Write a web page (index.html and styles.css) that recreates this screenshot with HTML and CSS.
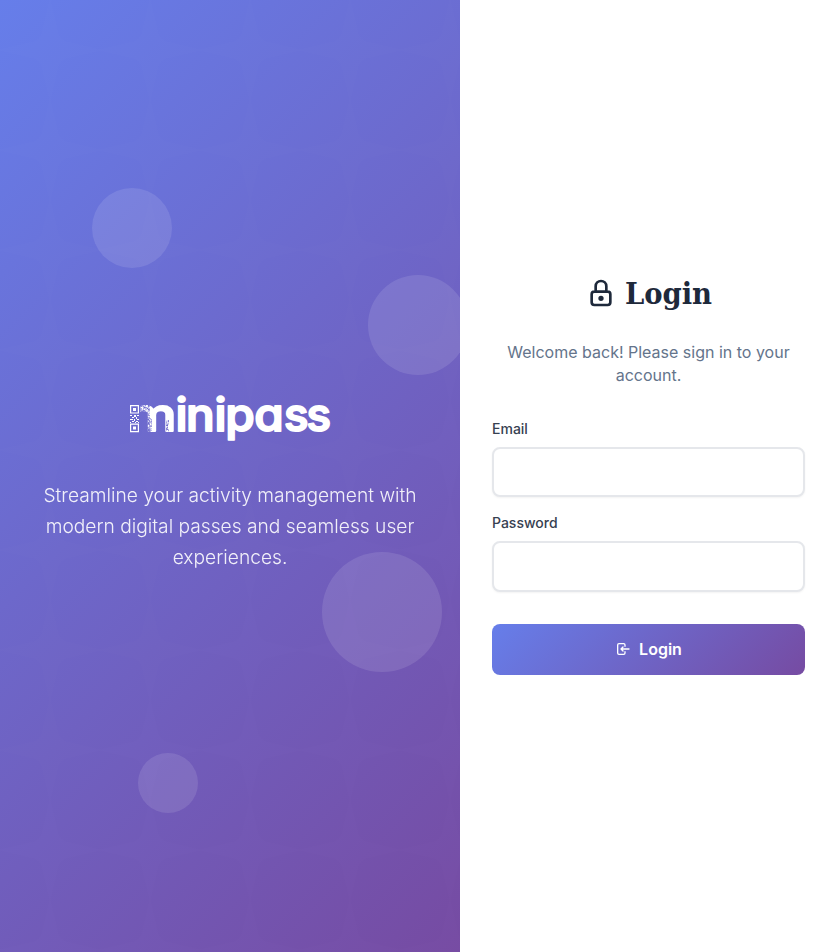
FILE: index.html
```html
<!DOCTYPE html>
<html lang="en">
<head>
<meta charset="utf-8">
<title>Login - minipass</title>
<link rel="stylesheet" href="styles.css">
</head>
<body>
<div class="layout">
  <section class="brand">
    <svg class="texture" width="100%" height="100%" aria-hidden="true">
      <defs>
        <pattern id="stars" width="100" height="100" patternUnits="userSpaceOnUse">
          <path d="M50 0L58 34Q60 40 66 42L100 50L66 58Q60 60 58 66L50 100L42 66Q40 60 34 58L0 50L34 42Q40 40 42 34Z" fill="#fff" fill-opacity=".008"/>
        </pattern>
      </defs>
      <rect width="100%" height="100%" fill="url(#stars)"/>
    </svg>
    <span class="bubble bubble-1"></span>
    <span class="bubble bubble-2"></span>
    <span class="bubble bubble-3"></span>
    <span class="bubble bubble-4"></span>
    <div class="brand-content">
      <svg class="logo" viewBox="0 0 200 46" role="img" aria-label="minipass">
        <defs>
          <filter id="speckle" x="0" y="0" width="1" height="1">
            <feTurbulence type="fractalNoise" baseFrequency=".6" numOctaves="2" seed="4"/>
            <feColorMatrix values="0 0 0 0 0  0 0 0 0 0  0 0 0 0 0  3 0 0 0 -1.1"/>
          </filter>
          <mask id="dissolve" maskUnits="userSpaceOnUse" x="0" y="0" width="50" height="46">
            <rect x="10.5" width="40" height="46" fill="#fff"/>
            <rect x="10" y="6" width="10" height="34" filter="url(#speckle)"/>
            <rect x="19" y="24" width="3" height="14" filter="url(#speckle)"/>
            <rect x="36" y="26" width="3" height="14" filter="url(#speckle)"/>
          </mask>
        </defs>
        <g class="qr">
          <path d="M.6 11.6h7.8v7.4H.6zM.6 30.2h7.8v7.4H.6z" fill="none" stroke="#fff" stroke-width="1.2"/>
          <path d="M3 14h3v3H3zM3 32.5h3v3H3zM0 21h2v1H0zM4 21h2v2H4zM7 21h2v1H7zM2 23h2v1H2zM6 23h1v2H6zM0 25h3v1H0zM4 25h1v2H4zM7 25h2v1H7zM2 27h2v1H2zM6 27h2v1H6zM0 28h1v1H0zM5 28h1v1H5zM8 28h1v1H8z" fill="#fff"/>
        </g>
        <g class="wordmark">
          <text x="-2.5" y="37.2" textLength="49" lengthAdjust="spacingAndGlyphs" mask="url(#dissolve)">m</text>
          <text x="42.9 52.8 79.7 89.8 117.3" y="37.2" transform="scale(1.06 1)">inipa</text>
          <text x="154 176.6" y="37.2" class="wordmark-end">ss</text>
        </g>
      </svg>
      <p class="tagline">Streamline your activity management with modern digital passes and seamless user experiences.</p>
    </div>
  </section>
  <main class="panel">
    <h1 class="title">
      <svg class="title-icon" viewBox="0 0 24 24"><path d="M5 13a2 2 0 0 1 2-2h10a2 2 0 0 1 2 2v6a2 2 0 0 1-2 2H7a2 2 0 0 1-2-2zM8 11V7a4 4 0 1 1 8 0v4M11 16a1 1 0 1 0 2 0a1 1 0 0 0-2 0"/></svg>
      <span>Login</span>
    </h1>
    <p class="subtitle">Welcome back! Please sign in to your account.</p>
    <form class="form">
      <label class="label" for="email">Email</label>
      <input class="input" id="email" type="email">
      <label class="label" for="password">Password</label>
      <input class="input input-last" id="password" type="password">
      <button class="submit" type="button">
        <svg class="submit-icon" viewBox="0 0 24 24"><path d="M15 8V6a2 2 0 0 0-2-2H6a2 2 0 0 0-2 2v12a2 2 0 0 0 2 2h7a2 2 0 0 0 2-2v-2M21 12H9l3-3M12 15l-3-3"/></svg>
        <span>Login</span>
      </button>
    </form>
  </main>
</div>
</body>
</html>
```

FILE: styles.css
```css
* { box-sizing: border-box; }
body { margin: 0; font-family: Inter, "Liberation Sans", sans-serif; background: #fff; }
.layout { display: flex; height: 952px; }
.brand {
  position: relative;
  flex: 0 0 460px;
  display: flex;
  align-items: center;
  justify-content: center;
  overflow: hidden;
  padding: 15px 32px 0;
  background: linear-gradient(135deg, #667eea 0%, #764ba2 100%);
}
.texture { position: absolute; inset: 0; }
.bubble { position: absolute; border-radius: 50%; background: rgba(255, 255, 255, .11); }
.bubble-1 { width: 80px; height: 80px; left: 92px; top: 188.4px; }
.bubble-2 { width: 100px; height: 100px; left: 368px; top: 275px; }
.bubble-3 { width: 120px; height: 120px; left: 322px; top: 552px; }
.bubble-4 { width: 60px; height: 60px; left: 138px; top: 753px; }
.brand-content { position: relative; text-align: center; color: #fff; }
.logo { display: block; width: 200px; height: 46px; margin: 0 auto 40px; overflow: visible; }
.wordmark {
  font-family: Inter, sans-serif;
  font-size: 45px;
  font-weight: 500;
  font-feature-settings: "cv11";
  fill: #fff;
  stroke: #fff;
  stroke-width: 2px;
  stroke-linejoin: round;
}
.wordmark-end { font-size: 45.5px; }
.tagline { margin: 0; font-size: 19.2px; font-weight: 300; line-height: 31px; opacity: .9; }
.panel {
  flex: 1;
  display: flex;
  flex-direction: column;
  justify-content: center;
  padding: 0 32px 2px;
}
.title {
  display: flex;
  align-items: center;
  justify-content: center;
  gap: 8px;
  margin: -1px 0 29px;
  font-family: "Roboto Slab", "DejaVu Serif Condensed", "DejaVu Serif", serif;
  font-size: 30.5px;
  font-weight: 700;
  line-height: 38px;
  color: #1e293b;
}
.title-icon, .submit-icon { fill: none; stroke: currentColor; stroke-width: 2; stroke-linecap: round; stroke-linejoin: round; }
.title-icon { width: 32px; height: 32px; }
.subtitle { margin: 0 0 32px; text-align: center; font-size: 16px; line-height: 23px; color: #64748b; }
.form { display: flex; flex-direction: column; }
.label { margin-bottom: 8px; font-size: 14px; font-weight: 500; line-height: 20px; color: #374151; }
.input {
  width: 100%;
  height: 50.4px;
  margin: 0 0 16px;
  border: 2px solid #e5e7eb;
  border-radius: 8px;
  background: #fff;
  box-shadow: 0 1px 2px rgba(0, 0, 0, .05);
}
.input-last { height: 51px; margin-bottom: 14.6px; }
.submit {
  display: flex;
  align-items: center;
  justify-content: center;
  gap: 8px;
  height: 51px;
  margin-top: 18px;
  padding: 0 0 1px;
  border: 0;
  border-radius: 8px;
  background: linear-gradient(135deg, #667eea 0%, #764ba2 100%);
  color: #fff;
  font-family: inherit;
  font-size: 16px;
  font-weight: 600;
}
.submit-icon { width: 16px; height: 16px; }
```
